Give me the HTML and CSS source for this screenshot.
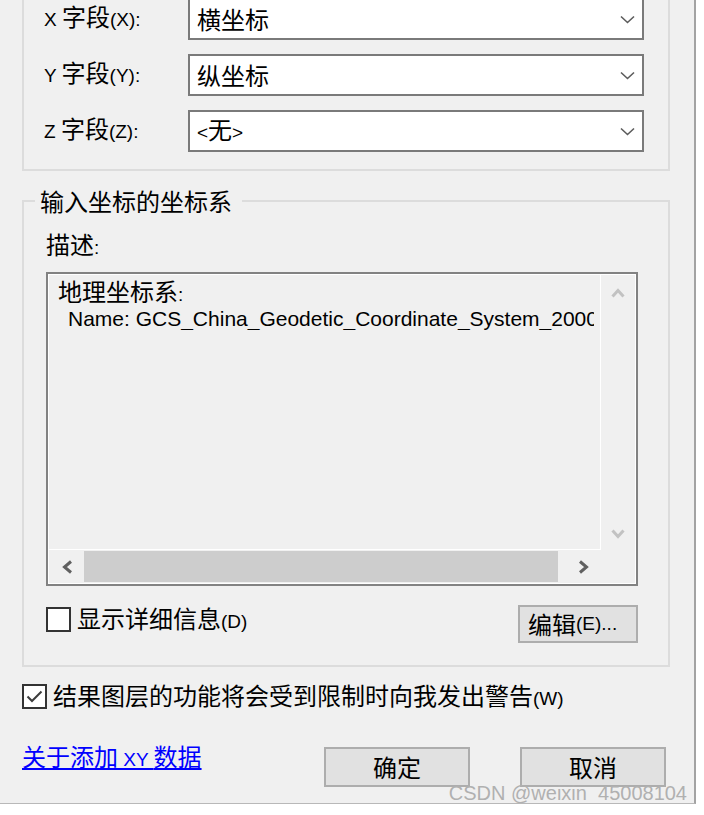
FILE: index.html
```html
<!DOCTYPE html>
<html lang="zh-CN">
<head>
<meta charset="utf-8">
<title>添加 XY 数据</title>
<link rel="stylesheet" href="styles.css">
</head>
<body>
<div class="dialog">
  <div class="group-fields">
    <div class="field-row">
      <span class="field-label"><span class="lat">X </span>字段<span class="lat">(X):</span></span>
      <div class="combo">
        <span class="combo-value">横坐标</span>
        <svg class="chev" width="15" height="9" viewBox="0 0 15 9"><polyline points="1,1.5 7.5,7.5 14,1.5" fill="none" stroke="#5c5c5c" stroke-width="1.6"/></svg>
      </div>
    </div>
    <div class="field-row">
      <span class="field-label"><span class="lat">Y </span>字段<span class="lat">(Y):</span></span>
      <div class="combo">
        <span class="combo-value">纵坐标</span>
        <svg class="chev" width="15" height="9" viewBox="0 0 15 9"><polyline points="1,1.5 7.5,7.5 14,1.5" fill="none" stroke="#5c5c5c" stroke-width="1.6"/></svg>
      </div>
    </div>
    <div class="field-row">
      <span class="field-label"><span class="lat">Z </span>字段<span class="lat">(Z):</span></span>
      <div class="combo">
        <span class="combo-value"><span class="lat">&lt;</span>无<span class="lat">&gt;</span></span>
        <svg class="chev" width="15" height="9" viewBox="0 0 15 9"><polyline points="1,1.5 7.5,7.5 14,1.5" fill="none" stroke="#5c5c5c" stroke-width="1.6"/></svg>
      </div>
    </div>
  </div>

  <fieldset class="group-crs">
    <legend class="group-title">输入坐标的坐标系</legend>
    <div class="desc-label">描述<span class="lat">:</span></div>
    <div class="desc-box">
      <div class="desc-inner">
        <div class="desc-main">
          <div class="desc-text">
            <div class="desc-line1">地理坐标系<span class="lat">:</span></div>
            <div class="desc-line2">Name: GCS_China_Geodetic_Coordinate_System_2000</div>
          </div>
          <div class="vscroll">
            <svg width="14" height="11" viewBox="0 0 14 11"><polyline points="1.5,9.5 7,3.5 12.5,9.5" fill="none" stroke="#c2c2c2" stroke-width="3"/></svg>
            <svg width="14" height="11" viewBox="0 0 14 11"><polyline points="1.5,1.5 7,7.5 12.5,1.5" fill="none" stroke="#c2c2c2" stroke-width="3"/></svg>
          </div>
        </div>
        <div class="hscroll-row">
          <div class="hscroll">
            <div class="sb-btn">
              <svg width="12" height="14" viewBox="0 0 12 14"><polyline points="10,1.5 3.5,7 10,12.5" fill="none" stroke="#606060" stroke-width="3"/></svg>
            </div>
            <div class="track"><div class="thumb"></div></div>
            <div class="sb-btn">
              <svg width="12" height="14" viewBox="0 0 12 14"><polyline points="2,1.5 8.5,7 2,12.5" fill="none" stroke="#606060" stroke-width="3"/></svg>
            </div>
          </div>
        </div>
      </div>
    </div>
    <div class="detail-row">
      <label class="check">
        <span class="check-box"></span>
        <span class="check-text">显示详细信息<span class="lat">(D)</span></span>
      </label>
      <button class="btn btn-edit" type="button">编辑<span class="lat">(E)...</span></button>
    </div>
  </fieldset>

  <label class="check warn-row">
    <span class="check-box">
      <svg width="21" height="21" viewBox="0 0 21 21"><polyline points="3.5,10.5 8,15 17.5,5.5" fill="none" stroke="#3c3c3c" stroke-width="2"/></svg>
    </span>
    <span class="check-text">结果图层的功能将会受到限制时向我发出警告<span class="lat">(W)</span></span>
  </label>

  <div class="footer">
    <a class="help-link" href="#">关于添加<span class="lat"> XY </span>数据</a>
    <div class="footer-buttons">
      <button class="btn btn-main" type="button">确定</button>
      <button class="btn btn-main" type="button">取消</button>
    </div>
  </div>

  <div class="watermark">CSDN @weixin_45008104</div>
</div>
</body>
</html>
```

FILE: styles.css
```css
* {
  box-sizing: border-box;
}

html,
body {
  margin: 0;
  padding: 0;
  background: #ffffff;
}

body {
  width: 704px;
  height: 815px;
  overflow: hidden;
  font-family: "Noto Sans CJK SC", "Liberation Sans", sans-serif;
  font-size: 24px;
  color: #000000;
}

.lat {
  font-family: "Liberation Sans", sans-serif;
  font-size: 19px;
}

.dialog {
  position: relative;
  display: flex;
  flex-direction: column;
  align-items: flex-start;
  width: 696px;
  height: 804px;
  background: #f0f0f0;
  border-right: 2px solid #a3a3a3;
  border-bottom: 1px solid #b8b8b8;
  overflow: hidden;
}

/* ---------- field group ---------- */
.group-fields {
  margin: -2px 0 0 22px;
  width: 648px;
  border: 2px solid #dcdcdc;
  border-top: 0;
  padding: 0 24px 17px 20px;
  display: flex;
  flex-direction: column;
  gap: 14px;
}

.field-row {
  display: flex;
  align-items: center;
  height: 42px;
}

.field-label {
  flex: 1;
  line-height: 28px;
  white-space: nowrap;
  margin-top: -3px;
}

.combo {
  width: 456px;
  height: 42px;
  border: 2px solid #7a7a7a;
  background: #ffffff;
  display: flex;
  align-items: center;
  justify-content: space-between;
  padding: 0 7px 0 7px;
}

.combo-value {
  line-height: 28px;
}

/* ---------- coordinate system group ---------- */
.group-crs {
  margin: 16px 0 0 22px;
  width: 648px;
  min-width: 0;
  border: 2px solid #dcdcdc;
  padding: 15px 30px 22px 22px;
}

.group-title {
  margin-left: -11px;
  padding: 0 10px 0 5px;
  line-height: 28px;
}

.desc-label {
  line-height: 28px;
}

.desc-box {
  margin-top: 10px;
  width: 592px;
  height: 314px;
  border: 2px solid #828282;
}

.desc-inner {
  height: 100%;
  border: 1px solid #ffffff;
  display: flex;
  flex-direction: column;
}

.desc-main {
  display: flex;
  height: 275px;
}

.desc-text {
  width: 552px;
  border-right: 1px solid #ffffff;
  border-bottom: 1px solid #ffffff;
  padding: 3px 6px 0 9px;
  overflow: hidden;
  white-space: nowrap;
}

.desc-line1 {
  line-height: 26px;
}

.desc-line2 {
  padding-left: 10px;
  font-family: "Liberation Sans", sans-serif;
  font-size: 21px;
  line-height: 22px;
  overflow: hidden;
}

.vscroll {
  flex: 1;
  display: flex;
  flex-direction: column;
  align-items: center;
  justify-content: space-between;
  padding: 12px 0 10px;
}

.hscroll-row {
  display: flex;
  height: 33px;
}

.hscroll {
  width: 552px;
  display: flex;
}

.sb-btn {
  width: 35px;
  display: flex;
  align-items: center;
  justify-content: center;
}

.track {
  flex: 1;
  padding: 1px 0;
}

.thumb {
  width: 474px;
  height: 100%;
  background: #cdcdcd;
}

.detail-row {
  margin-top: 19px;
  width: 592px;
  display: flex;
  justify-content: space-between;
  align-items: flex-start;
}

/* ---------- checkboxes ---------- */
.check {
  display: flex;
  align-items: center;
  gap: 6px;
  height: 29px;
}

.check-box {
  width: 25px;
  height: 25px;
  border: 2px solid #333333;
  background: #ffffff;
  display: flex;
  align-items: center;
  justify-content: center;
}

.check-text {
  line-height: 28px;
  white-space: nowrap;
}

.warn-row {
  margin: 15px 0 0 22px;
}

/* ---------- buttons ---------- */
.btn {
  background: #e1e1e1;
  border: 2px solid #adadad;
  font-family: inherit;
  font-size: 24px;
  color: #000000;
  padding: 0;
  margin: 0;
  display: flex;
  align-items: center;
  justify-content: center;
  line-height: 28px;
}

.btn-edit {
  width: 120px;
  height: 38px;
  justify-content: flex-start;
  padding-left: 8px;
}

.footer {
  margin-top: 36px;
  width: 694px;
  display: flex;
  align-items: flex-start;
  padding: 0 28px 0 22px;
}

.help-link {
  margin-top: -2px;
  color: #0000ff;
  text-decoration: underline;
  line-height: 22px;
}

.footer-buttons {
  margin-left: auto;
  display: flex;
  gap: 50px;
}

.btn-main {
  width: 146px;
  height: 40px;
}

.watermark {
  position: absolute;
  right: 7px;
  bottom: 1px;
  font-family: "Liberation Sans", sans-serif;
  font-size: 20px;
  line-height: 18px;
  color: #b0b0b0;
  white-space: nowrap;
}
```
